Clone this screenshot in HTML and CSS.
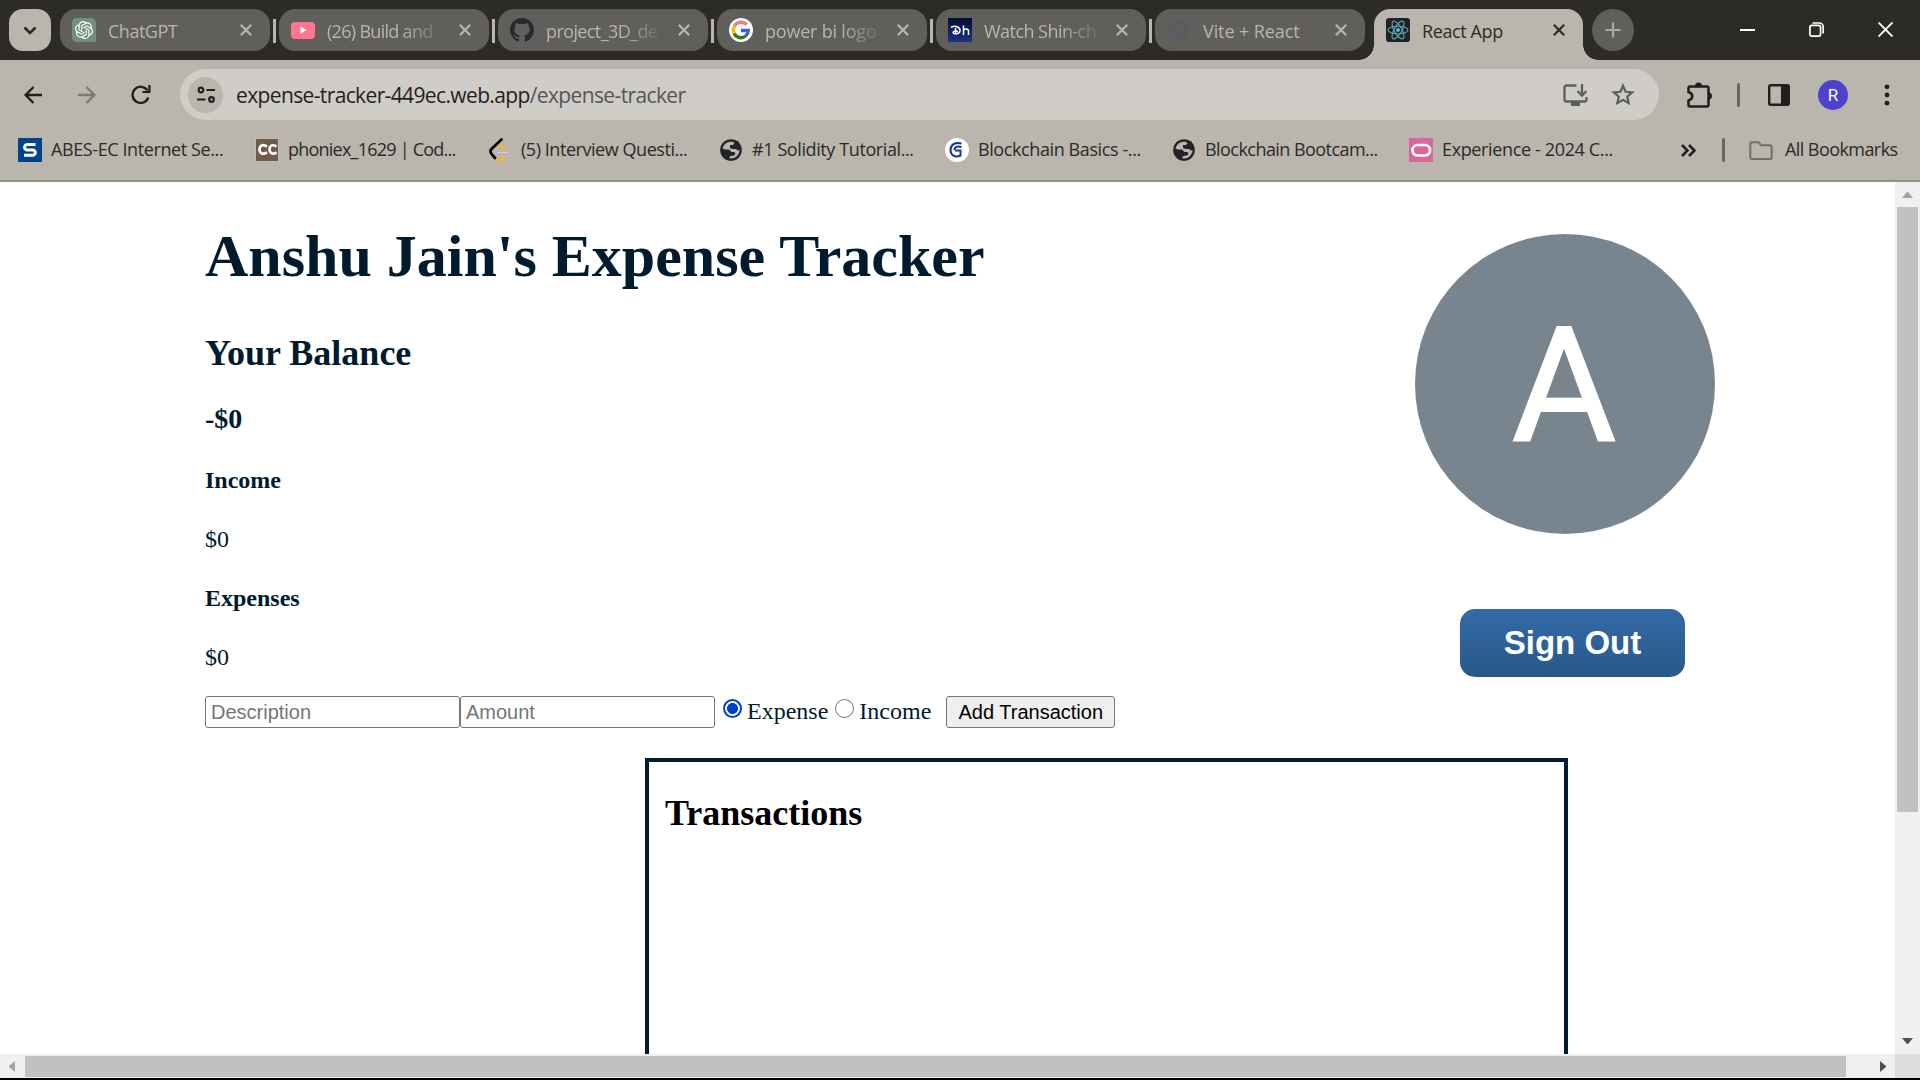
FILE: index.html
```html
<!DOCTYPE html>
<html lang="en">
<head>
<meta charset="utf-8">
<title>React App</title>
<link rel="stylesheet" href="styles.css">
</head>
<body>
<svg class="defs" width="0" height="0">
  <symbol id="x" viewBox="0 0 12 12"><path d="M.8.8l10.4 10.4M11.2.8L.8 11.2" fill="none" stroke="currentColor" stroke-width="2.2"/></symbol>
  <symbol id="globe" viewBox="0 0 24 24"><circle cx="12" cy="12" r="9.7" fill="none" stroke="currentColor" stroke-width="2.2"/><path d="M8 3h11l3 6.500-1 2.500-2.500.5-1.500-1.500h-3l-3-.8V7h3l1.500-2-2-1.500zM2 10l4 1.500h4l2.500 2.500h3l1 2-2 1.700h-2.500l-1.500 1V22l-5-2.500-3-5z" fill="currentColor"/></symbol>
</svg>
<header class="tabstrip">
  <button class="tab-search"><svg width="14" height="9" viewBox="0 0 14 9"><path d="M1.500 1.500L7 7l5.500-5.500" fill="none" stroke="#2a2926" stroke-width="2.600"/></svg></button>
  <nav class="tabs">
    <div class="tab"><svg class="fav" viewBox="0 0 24 24"><path d="M5 0h14a5 5 0 015 5v19H5a5 5 0 01-5-5V5a5 5 0 015-5z" fill="#71907d"/><path transform="translate(3 3) scale(.75)" fill="#fff" d="M22.282 9.821a5.985 5.985 0 0 0-.516-4.910 6.046 6.046 0 0 0-6.510-2.900A6.065 6.065 0 0 0 4.981 4.180a5.985 5.985 0 0 0-3.998 2.900 6.046 6.046 0 0 0 .743 7.097 5.980 5.980 0 0 0 .510 4.911 6.051 6.051 0 0 0 6.515 2.900A5.985 5.985 0 0 0 13.260 24a6.056 6.056 0 0 0 5.772-4.206 5.990 5.990 0 0 0 3.997-2.900 6.056 6.056 0 0 0-.747-7.073zM13.260 22.430a4.476 4.476 0 0 1-2.876-1.040l.141-.081 4.779-2.758a.795.795 0 0 0 .392-.681v-6.737l2.020 1.168a.071.071 0 0 1 .038.052v5.583a4.504 4.504 0 0 1-4.494 4.494zM3.600 18.304a4.470 4.470 0 0 1-.535-3.014l.142.085 4.783 2.759a.771.771 0 0 0 .780 0l5.843-3.369v2.332a.080.080 0 0 1-.033.062L9.740 19.950a4.500 4.500 0 0 1-6.140-1.646zM2.340 7.896a4.485 4.485 0 0 1 2.366-1.973V11.600a.766.766 0 0 0 .388.676l5.815 3.355-2.020 1.168a.076.076 0 0 1-.071 0l-4.830-2.786A4.504 4.504 0 0 1 2.340 7.872zm16.597 3.855l-5.833-3.387L15.119 7.200a.076.076 0 0 1 .071 0l4.830 2.791a4.494 4.494 0 0 1-.676 8.105v-5.678a.790.790 0 0 0-.407-.667zm2.010-3.023l-.141-.085-4.774-2.782a.776.776 0 0 0-.785 0L9.409 9.230V6.897a.066.066 0 0 1 .028-.061l4.830-2.787a4.500 4.500 0 0 1 6.680 4.660zm-12.640 4.135l-2.020-1.164a.080.080 0 0 1-.038-.057V6.075a4.500 4.500 0 0 1 7.375-3.453l-.142.080L8.704 5.460a.795.795 0 0 0-.393.681zm1.097-2.365l2.602-1.500 2.607 1.500v2.999l-2.597 1.500-2.607-1.500z"/></svg><span class="tt ls-gpt">ChatGPT</span><svg class="close"><use href="#x"/></svg></div>
    <i class="tsep"></i>
    <div class="tab"><svg class="fav" viewBox="0 0 24 24"><rect y="4" width="24" height="17" rx="4" fill="#ff7592"/><path d="M9.500 8.500l6 3.500-6 3.700z" fill="#fff"/></svg><span class="tt fade ls-build">(26) Build and</span><svg class="close"><use href="#x"/></svg></div>
    <i class="tsep"></i>
    <div class="tab"><svg class="fav" viewBox="0 0 16 16"><path fill="#252930" d="M8 0C3.580 0 0 3.580 0 8c0 3.540 2.290 6.530 5.470 7.590.4.070.55-.17.55-.38 0-.19-.01-.82-.01-1.490-2.010.37-2.530-.49-2.690-.94-.09-.23-.48-.94-.82-1.130-.28-.15-.68-.52-.01-.53.63-.01 1.080.58 1.230.82.72 1.210 1.870.87 2.330.66.070-.52.28-.87.51-1.070-1.780-.2-3.640-.89-3.640-3.950 0-.87.31-1.590.82-2.150-.08-.2-.36-1.020.08-2.120 0 0 .67-.21 2.200.82.64-.18 1.320-.27 2-.27s1.360.09 2 .27c1.530-1.040 2.200-.82 2.200-.82.44 1.100.16 1.920.08 2.120.51.56.82 1.270.82 2.150 0 3.070-1.870 3.750-3.650 3.950.29.25.54.73.54 1.480 0 1.070-.01 1.930-.01 2.200 0 .21.15.46.55.38A8.010 8.010 0 0016 8c0-4.420-3.580-8-8-8z"/></svg><span class="tt fade ls-proj">project_3D_de</span><svg class="close"><use href="#x"/></svg></div>
    <i class="tsep"></i>
    <div class="tab"><svg class="fav" viewBox="0 0 24 24"><circle cx="12" cy="12" r="12" fill="#fff"/><g fill="none" stroke-width="3.500"><path d="M17.800 6.800A7.600 7.600 0 005.200 8.500" stroke="#e5868c"/><path d="M5.200 8.500a7.600 7.600 0 000 7" stroke="#f5bd05"/><path d="M5.200 15.500a7.600 7.600 0 0011.500 2.500" stroke="#34791d"/><path d="M16.700 18a7.600 7.600 0 002.500-5.500H12" stroke="#3c62d8"/></g></svg><span class="tt fade ls-power">power bi logo</span><svg class="close"><use href="#x"/></svg></div>
    <i class="tsep"></i>
    <div class="tab"><svg class="fav" viewBox="0 0 24 24"><defs><linearGradient id="dh" x2="0" y2="1"><stop stop-color="#070b34"/><stop offset="1" stop-color="#1b3480"/></linearGradient></defs><rect width="24" height="24" fill="url(#dh)"/><path d="M3 9.500c4-2.500 9-.5 9 3 0 4-7 4-7 2 0-1.300 2.500-1.700 5-1.200M7.500 10v5.500M15.500 7.500v9.500M15.500 12.500c1-2 5-2 5 .8V17" fill="none" stroke="#fff" stroke-width="1.500"/></svg><span class="tt fade ls-watch">Watch Shin-ch</span><svg class="close"><use href="#x"/></svg></div>
    <i class="tsep"></i>
    <div class="tab"><svg class="fav" viewBox="0 0 24 24"><g fill="none" stroke="#525a70" stroke-width="1.200"><circle cx="12" cy="12" r="9.500"/><path d="M9 3l2 4-3 3-4-1M4 12l5 2 1 5M14 4l5 4-4 3-1 3 4 3"/></g></svg><span class="tt ls-vite">Vite + React</span><svg class="close"><use href="#x"/></svg></div>
    <i class="tsep off"></i>
    <div class="tab active"><svg class="fav" viewBox="0 0 24 24"><rect width="24" height="24" rx="3" fill="#212121"/><g fill="none" stroke="#59a8ba" stroke-width="1.100"><ellipse cx="12" cy="12" rx="10" ry="3.800"/><ellipse cx="12" cy="12" rx="10" ry="3.800" transform="rotate(60 12 12)"/><ellipse cx="12" cy="12" rx="10" ry="3.800" transform="rotate(120 12 12)"/></g><circle cx="12" cy="12" r="2" fill="#59b8cc"/></svg><span class="tt ls-react">React App</span><svg class="close"><use href="#x"/></svg></div>
  </nav>
  <button class="newtab"><svg width="16" height="16" viewBox="0 0 16 16"><path d="M8 .5v15M.5 8h15" stroke="#aeaaa3" stroke-width="2.200"/></svg></button>
  <div class="winctl">
    <svg width="15" height="16" viewBox="0 0 15 16"><path d="M0 8h15" stroke="#fff" stroke-width="2"/></svg>
    <svg width="15" height="15" viewBox="0 0 15 15"><g fill="none" stroke="#fff" stroke-width="1.700"><rect x=".9" y="3.400" width="10.700" height="10.700" rx="2"/><path d="M3.500 1h6.700a4 4 0 014 4v6.500"/></g></svg>
    <svg width="15" height="15" viewBox="0 0 15 15"><path d="M.5.5l14 14M14.500.5l-14 14" stroke="#fff" stroke-width="1.900"/></svg>
  </div>
</header>
<div class="toolbar">
  <svg class="back" width="18" height="18" viewBox="0 0 18 18"><path d="M9.500 1L1.600 9l7.900 8M1.600 9H18" fill="none" stroke="#1f1f1f" stroke-width="2.300"/></svg>
  <svg class="fwd" width="18" height="18" viewBox="0 0 18 18"><path d="M8.500 1l7.900 8-7.900 8M16.400 9H0" fill="none" stroke="#7d7972" stroke-width="2.300"/></svg>
  <svg class="reload" width="20" height="20" viewBox="0 0 20 20"><path d="M17.300 12.500A8.100 8.100 0 1116.500 5.500" fill="none" stroke="#1f1f1f" stroke-width="2.300"/><path d="M19.500 0v8h-8V6h5.800V0z" fill="#1f1f1f"/></svg>
  <div class="omnibox">
    <span class="site"><svg width="18" height="18" viewBox="0 0 18 18"><g fill="none" stroke="#1f1f1f" stroke-width="2.200"><circle cx="4" cy="4" r="2.300"/><path d="M9.500 4H18M0 13.500h8.500"/><circle cx="14.500" cy="13.500" r="2.300"/></g></svg></span>
    <span class="url">expense-tracker-449ec.web.app<span class="path">/expense-tracker</span></span>
    <svg class="install" width="25" height="22" viewBox="0 0 25 22"><g fill="none" stroke="#5b5e60" stroke-width="2.300"><path d="M13.500 1.500H3.500a2 2 0 00-2 2v12a2 2 0 002 2h18a2 2 0 002-2V13"/><path d="M19 0v11M14.500 7l4.500 4.500L23.500 7"/></g><path d="M8 18h9v4H8z" fill="#5b5e60"/></svg>
    <svg width="24" height="23" viewBox="0 0 24 23"><path d="M12 2.800l2.600 6 6.600.6-5 4.300 1.500 6.400-5.700-3.400-5.700 3.400 1.500-6.400-5-4.300 6.600-.6z" fill="none" stroke="#5b5e60" stroke-width="2.200"/></svg>
  </div>
  <svg class="ext" width="26" height="26" viewBox="0 0 26 26"><path d="M4 4.500h17a1.500 1.500 0 011.500 1.500v17a1.500 1.500 0 01-1.500 1.500H4A1.500 1.500 0 012.500 23v-4.500c5-1.500 5-7 0-8.500V6A1.500 1.500 0 014 4.500z" fill="none" stroke="#1f1f1f" stroke-width="2.500"/><path d="M9 4a3.500 3.500 0 017 0zM22.500 10.500a3.500 3.500 0 010 7z" fill="#1f1f1f"/></svg>
  <i class="vsep"></i>
  <svg class="panel" width="22" height="22" viewBox="0 0 22 22"><rect x="1.200" y="1.200" width="19.600" height="19.600" rx="1.500" fill="none" stroke="#1f1f1f" stroke-width="2.400"/><path d="M13 1h8v20h-8z" fill="#1f1f1f"/></svg>
  <span class="profile">R</span>
  <svg class="menu" width="6" height="22" viewBox="0 0 6 22"><g fill="#1f1f1f"><circle cx="3" cy="2.800" r="2.400"/><circle cx="3" cy="11" r="2.400"/><circle cx="3" cy="19.200" r="2.400"/></g></svg>
</div>
<div class="bookmarks">
  <a class="bm b1"><svg viewBox="0 0 24 24"><rect width="24" height="24" fill="#00458c"/><path d="M17.500 6.500H9.300a2.500 2.500 0 000 5.500h5.400a2.500 2.500 0 010 5.300H6" fill="none" stroke="#fff" stroke-width="3"/></svg><span>ABES-EC Internet Se...</span></a>
  <a class="bm b2"><svg viewBox="0 0 24 24"><rect x=".5" y=".5" width="23" height="23" fill="#6d5b4b" stroke="#c9bba9"/><path d="M12 8.500C7 5.500 4.500 8 4.500 11.500S7.500 17 12 14.500M21.500 8.500c-5-3-7 .0-7 3s2.500 5.500 7 3" fill="none" stroke="#fff" stroke-width="2.700"/></svg><span>phoniex_1629 | Cod...</span></a>
  <a class="bm b3"><svg viewBox="0 0 24 24"><g fill="none" stroke-linecap="round" stroke-width="2.700"><path d="M10.500 6l5.500 4.500M8 20.500c3 3 5 2 8-1" stroke="#f9b52f"/><path d="M13.500 1.500L3.500 11q-2 2 0 5L7 20" stroke="#000"/></g><path d="M9 14.500h11" stroke="#d5d2ce"/></svg><span>(5) Interview Questi...</span></a>
  <a class="bm b4"><svg class="gl"><use href="#globe"/></svg><span>#1 Solidity Tutorial...</span></a>
  <a class="bm b5"><svg viewBox="0 0 24 24"><circle cx="12" cy="12" r="12" fill="#fff"/><path d="M16.500 5.500C10 3.500 5.500 7 5.500 12s4.500 8 10 5.500v-5H10M16.500 9C12.500 7.500 9.500 9 9.200 12" fill="none" stroke="#12349b" stroke-width="2"/></svg><span>Blockchain Basics -...</span></a>
  <a class="bm b6"><svg class="gl"><use href="#globe"/></svg><span>Blockchain Bootcam...</span></a>
  <a class="bm b7"><svg viewBox="0 0 24 24"><rect width="24" height="24" fill="#db6699"/><rect x="3.500" y="7" width="17.500" height="10.500" rx="5.200" fill="none" stroke="#fff" stroke-width="2.700"/></svg><span>Experience - 2024 C...</span></a>
  <svg class="more" width="15" height="13" viewBox="0 0 15 13"><path d="M1 1l5.500 5.500L1 12M8 1l5.500 5.500L8 12" fill="none" stroke="#1f1f1f" stroke-width="2.500"/></svg>
  <i class="vsep"></i>
  <a class="bm b8"><svg viewBox="0 0 24 24"><path d="M3 4.200h6.500l2.500 3h9a1.700 1.700 0 011.700 1.700v10.400a1.700 1.700 0 01-1.700 1.700H3a1.700 1.700 0 01-1.700-1.700V5.900A1.700 1.700 0 013 4.200z" fill="none" stroke="#716d67" stroke-width="2"/></svg><span>All Bookmarks</span></a>
</div>
<div class="viewport">
  <main class="page">
    <div class="top">
      <section class="summary">
        <h1>Anshu Jain's Expense Tracker</h1>
        <h2>Your Balance</h2>
        <h3>-$0</h3>
        <h4>Income</h4>
        <p>$0</p>
        <h4>Expenses</h4>
        <p>$0</p>
        <form class="add">
          <input type="text" placeholder="Description"><input type="text" placeholder="Amount">
          <label class="exp"><i class="radio on"></i>Expense</label>
          <label class="inc"><i class="radio"></i>Income</label>
          <button type="button">Add Transaction</button>
        </form>
      </section>
      <aside class="user">
        <div class="avatar">A</div>
        <button class="signout">Sign Out</button>
      </aside>
    </div>
    <section class="transactions"><h2>Transactions</h2></section>
  </main>
  <div class="vbar"><i class="up"></i><b></b><i class="down"></i></div>
  <div class="hbar"><i class="left"></i><b></b><i class="right"></i></div>
  <div class="corner"></div>
</div>
</body>
</html>
```
FILE: styles.css
```css
* { box-sizing: border-box; }
html, body { margin: 0; height: 1080px; overflow: hidden; }
body { display: flex; flex-direction: column; background: #000; font-family: "Open Sans", "Noto Sans", sans-serif; }
button { border: 0; padding: 0; }
svg { display: block; flex: none; }
.defs { position: absolute; }

.tabstrip { height: 60px; flex: none; display: flex; align-items: flex-start; padding: 9px 0 0 9px; background: #2d2b27; }
.tab-search { width: 42px; height: 42px; border-radius: 14px; background: #bab5ad; display: grid; place-items: center; margin-right: 9px; }
.tabs { display: flex; }
.tab { width: 210px; height: 42px; border-radius: 16px; background: #605f5b; color: #bab5ad; display: flex; align-items: center; padding: 0 18px 0 12px; }
.fav { width: 24px; height: 24px; }
.tt { width: 126px; margin: 2px 0 0 12px; font-size: 18px; line-height: 26px; white-space: nowrap; flex: none; }
.fade { -webkit-mask-image: linear-gradient(90deg, #000 75px, rgba(0, 0, 0, .2) 112px); mask-image: linear-gradient(90deg, #000 75px, rgba(0, 0, 0, .2) 112px); }
.ls-gpt { letter-spacing: -.5px; }
.ls-build { letter-spacing: -.7px; }
.ls-proj { letter-spacing: -.6px; }
.ls-power { letter-spacing: -.2px; }
.ls-watch { letter-spacing: -.55px; }
.ls-vite { letter-spacing: -.1px; }
.ls-react { letter-spacing: -.4px; }
.close { width: 12px; height: 12px; margin-left: 6px; }
.active .close { margin-left: 5px; }
.tsep { width: 3px; height: 24px; margin: 10px 3px 0; background: #bab5ad; }
.off { background: none; }
.active { position: relative; width: 209px; height: 51px; padding-bottom: 9px; background: #bab5ad; color: #2d2b27; border-radius: 16px 16px 0 0; }
.active::before, .active::after { content: ""; position: absolute; bottom: 0; width: 15px; height: 15px; }
.active::before { left: -15px; background: radial-gradient(circle at 0 0, transparent 14.500px, #bab5ad 15px); }
.active::after { right: -15px; background: radial-gradient(circle at 100% 0, transparent 14.500px, #bab5ad 15px); }
.newtab { width: 42px; height: 42px; margin-left: 9px; border-radius: 50%; background: #605f5b; display: grid; place-items: center; }
.winctl { margin: 13px 27px 0 auto; display: flex; gap: 54px; }

.toolbar { height: 69px; flex: none; display: flex; align-items: center; padding: 0 24px; background: #bab5ad; }
.fwd { margin-left: 36px; }
.reload { margin-left: 35px; }
.omnibox { width: 1479px; height: 51px; margin-left: 29px; border-radius: 26px; background: #d0ccc7; display: flex; align-items: center; padding: 0 24px 0 8px; }
.site { width: 35px; height: 36px; border-radius: 50%; background: #bab5ad; display: grid; place-items: center; }
.url { margin: 0 auto 0 13px; font-size: 21px; letter-spacing: -.63px; color: #1f1f1f; white-space: nowrap; }
.path { color: #54565a; }
.install { margin-right: 23px; }
.ext { margin-left: 27px; }
.vsep { width: 3px; height: 24px; border-radius: 2px; background: #6a6762; }
.ext + .vsep { margin-left: 25px; }
.panel { margin-left: 28px; }
.profile { width: 30px; height: 30px; margin-left: 28px; border-radius: 50%; background: #4e41cb; color: #fff; font: 17px/31px Roboto, sans-serif; text-align: center; }
.menu { margin-left: 36px; }

.bookmarks { height: 53px; flex: none; display: flex; align-items: center; padding: 0 0 9px 18px; background: #bab5ad; border-bottom: 2px solid #94908a; }
.bm { display: flex; align-items: center; gap: 9px; flex: none; width: 237px; color: #2b2a27; font-size: 18px; line-height: 24px; letter-spacing: -.4px; white-space: nowrap; }
.bm svg { width: 24px; height: 24px; }
.bm span { margin-top: -2px; }
.b2 { width: 233px; letter-spacing: -.77px; }
.b3 { width: 231px; letter-spacing: -.45px; }
.b4 { width: 226px; }
.b5 { width: 227px; }
.b6 { width: 237px; letter-spacing: -.55px; }
.b7 { width: 272px; letter-spacing: -.36px; }
.gl { color: #222326; }
.bookmarks .vsep { margin: 0 24px 0 26px; }
.b8 { width: auto; gap: 12px; letter-spacing: -.57px; }

.viewport { height: 896px; flex: none; background: #fff; display: grid; grid-template: 872px 24px / 1895px 25px; font-family: "Liberation Serif", serif; }
.page { overflow: hidden; padding: 40px 0 0 205px; display: flex; flex-direction: column; color: #001b2e; }
.top { display: flex; height: 536px; flex: none; }
.summary { width: 1210px; font-size: 24px; line-height: 28px; }
h1, h2, h3, h4, p { margin: 0; }
h1 { font-size: 60px; line-height: 68px; }
h2 { font-size: 36px; line-height: 42px; margin-top: 42px; }
h3 { font-size: 28px; line-height: 32px; margin-top: 29px; }
h4 { font-size: 24px; line-height: 28px; margin-top: 31px; }
p { margin-top: 31px; }
.add { display: flex; margin-top: 25px; height: 32px; }
.add input { width: 255px; height: 32px; border: 1px solid #767676; border-radius: 3px; padding: 1px 5px; font: 20px "Liberation Sans", sans-serif; background: #fff; }
.add input::placeholder { color: #757575; opacity: 1; }
.add label { display: flex; line-height: 31px; }
.radio { width: 19px; height: 19px; border: 1.500px solid #767676; border-radius: 50%; background: #fff; margin: 3px 5px 0 0; }
.on { border: 2px solid #0040d0; background: radial-gradient(#0040d0 5.200px, transparent 5.800px); }
.exp { margin-left: 8px; }
.inc { margin-left: 7px; }
.add button { width: 169px; height: 32px; margin-left: 15px; border: 1px solid #767676; border-radius: 3px; background: #efefef; color: #000; font: 20px "Liberation Sans", sans-serif; }
.user { padding-top: 12px; display: flex; flex-direction: column; }
.avatar { width: 300px; height: 300px; padding-right: 2px; border-radius: 50%; background: #78858e; color: #fff; text-align: center; font: 160px/306px Roboto, sans-serif; -webkit-text-stroke: 2px #fff; }
.signout { width: 225px; height: 68px; margin: 75px 0 0 45px; border-radius: 15px; background: linear-gradient(#346aa6, #285889); color: #fff; font: bold 33px/68px "Liberation Sans", sans-serif; }
.transactions { width: 923px; flex: 1; margin-left: 440px; border: 4px solid #001b2e; border-bottom: 0; padding-left: 16px; color: #000; }
.transactions h2 { margin-top: 30px; }
.vbar { background: #f0f0f0; display: flex; flex-direction: column; align-items: center; padding-top: 10px; }
.vbar b { width: 21px; height: 605px; background: #c1c1c1; margin: 9px 0 226px; }
.hbar { background: #f0f0f0; display: flex; align-items: center; padding-left: 9px; }
.hbar b { height: 21px; width: 1821px; background: #c1c1c1; margin: 0 34px 0 10px; }
.up, .down { border: 5.500px solid transparent; width: 11px; height: 6px; border-top: 0; border-bottom: 6px solid #a3a3a3; }
.down { border-bottom: 0; border-top: 6px solid #505050; }
.left, .right { border: 5.500px solid transparent; width: 6px; height: 11px; border-left: 0; border-right: 6px solid #a3a3a3; }
.right { border-right: 0; border-left: 6px solid #505050; }
.corner { background: #dcdcdc; }
```
